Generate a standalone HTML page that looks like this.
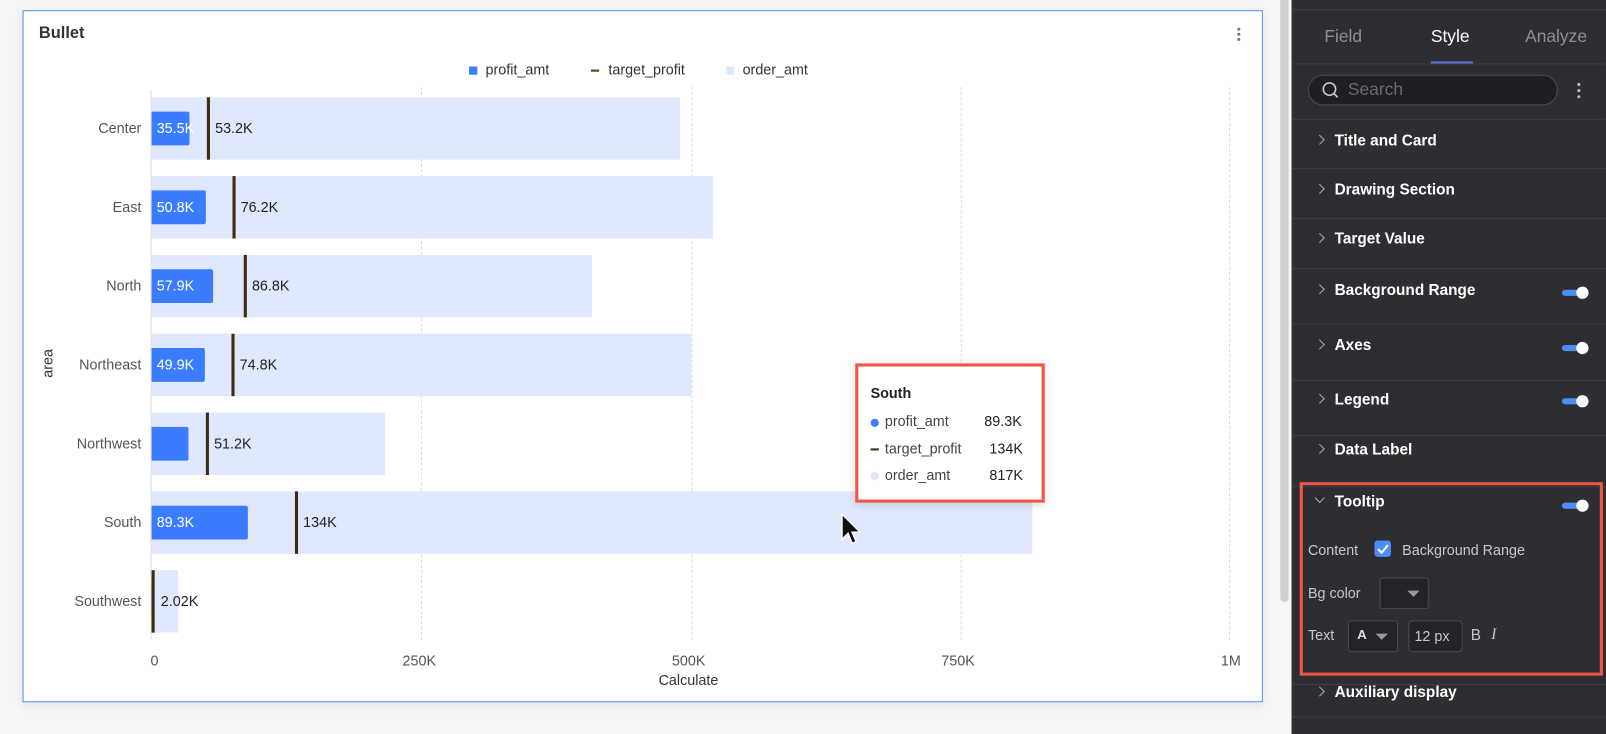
<!DOCTYPE html>
<html><head><meta charset="utf-8"><style>
*{box-sizing:border-box;margin:0;padding:0}
body{width:1606px;height:734px;overflow:hidden;background:#f5f5f6;font-family:"Liberation Sans",Arial,sans-serif}
#s{position:absolute;left:0;top:0;width:1568px;height:717px;transform:scale(1.02423,1.0237);transform-origin:0 0}
.a{position:absolute}
.card{left:22px;top:10px;width:1211px;height:676px;background:#fff;border:1px solid #4e8cf7;box-shadow:0 3px 8px rgba(0,0,0,.08)}
.lab{font-size:14px;color:#555;text-align:right;width:100px;left:38px}
.bg{background:#e0e8fd;height:61px;left:148px}
.pf{background:#3b7cff;height:33px;left:148px;border-radius:0 2px 2px 0;color:#fff;font-size:14px;line-height:33px;padding-left:5px;white-space:nowrap}
.tg{background:#3d2b0f;width:3px;height:61px}
.tv{font-size:14px;color:#222}
.grid{border-left:1px dashed #ddd;top:85px;height:540px;width:0}
.tick{font-size:14px;color:#555;top:637px}
.p{left:1261px;top:0;width:307px;height:717px;background:#2d2e32}
.it{left:1261px;width:307px;color:#fff;font-weight:bold;font-size:15px;padding-left:42px}
.ln{left:1261px;width:307px;height:1px;background:#3e3f44}
.chev{position:absolute;left:24px;top:4px;width:7px;height:7px;border-right:1.5px solid #aaa;border-top:1.5px solid #aaa;transform:rotate(45deg)}
.tog{left:1525px;width:24px;height:6px;background:#4e8cf7;border-radius:3px}
.tog:after{content:"";position:absolute;right:-2px;top:-3px;width:12px;height:12px;border-radius:6px;background:#fff}
.g{color:#c8c8cc;font-size:14px}
</style></head><body><div id="s">
<div class="a card"></div>
<div class="a" style="left:38px;top:24px;font-size:16px;font-weight:bold;color:#333">Bullet</div>
<div class="a" style="left:1208px;top:27px;width:3px;height:3px;background:#777;border-radius:2px;box-shadow:0 5px 0 #777,0 10px 0 #777"></div>
<!-- legend -->
<div class="a" style="left:458px;top:65px;width:8px;height:8px;background:#3b7cff"></div>
<div class="a" style="left:474px;top:60px;font-size:14px;color:#333">profit_amt</div>
<div class="a" style="left:577px;top:68px;width:8px;height:2px;background:#5a3f15"></div>
<div class="a" style="left:594px;top:60px;font-size:14px;color:#333">target_profit</div>
<div class="a" style="left:709px;top:65px;width:8px;height:8px;background:#dfe7fd"></div>
<div class="a" style="left:725px;top:60px;font-size:14px;color:#333">order_amt</div>
<!-- grid -->
<div class="a grid" style="left:411px"></div><div class="a grid" style="left:675px"></div><div class="a grid" style="left:938px"></div><div class="a grid" style="left:1200px"></div>
<div class="a" style="left:147px;top:88px;width:1px;height:537px;background:#ddd"></div>
<!-- rows -->
<div class="a bg" style="top:95px;width:516px"></div><div class="a pf" style="top:109px;width:37px">35.5K</div><div class="a tg" style="left:202px;top:95px"></div><div class="a tv" style="left:210px;top:117px">53.2K</div><div class="a lab" style="top:117px">Center</div>
<div class="a bg" style="top:172px;width:548px"></div><div class="a pf" style="top:186px;width:53px">50.8K</div><div class="a tg" style="left:227px;top:172px"></div><div class="a tv" style="left:235px;top:194px">76.2K</div><div class="a lab" style="top:194px">East</div>
<div class="a bg" style="top:249px;width:430px"></div><div class="a pf" style="top:263px;width:60px">57.9K</div><div class="a tg" style="left:238px;top:249px"></div><div class="a tv" style="left:246px;top:271px">86.8K</div><div class="a lab" style="top:271px">North</div>
<div class="a bg" style="top:326px;width:527px"></div><div class="a pf" style="top:340px;width:52px">49.9K</div><div class="a tg" style="left:226px;top:326px"></div><div class="a tv" style="left:234px;top:348px">74.8K</div><div class="a lab" style="top:348px">Northeast</div>
<div class="a bg" style="top:403px;width:228px"></div><div class="a pf" style="top:417px;width:36px"></div><div class="a tg" style="left:201px;top:403px"></div><div class="a tv" style="left:209px;top:425px">51.2K</div><div class="a lab" style="top:425px">Northwest</div>
<div class="a bg" style="top:480px;width:860px"></div><div class="a pf" style="top:494px;width:94px">89.3K</div><div class="a tg" style="left:288px;top:480px"></div><div class="a tv" style="left:296px;top:502px">134K</div><div class="a lab" style="top:502px">South</div>
<div class="a bg" style="top:557px;width:26px"></div><div class="a" style="left:148px;top:571px;width:2px;height:33px;background:#3b7cff"></div><div class="a tg" style="left:148px;top:557px"></div><div class="a tv" style="left:157px;top:579px">2.02K</div><div class="a lab" style="top:579px">Southwest</div>
<div class="a" style="left:32px;top:347px;font-size:14px;color:#333;transform:rotate(-90deg)">area</div>
<div class="a tick" style="left:147px">0</div><div class="a tick" style="left:393px">250K</div><div class="a tick" style="left:656px">500K</div><div class="a tick" style="left:919px">750K</div><div class="a tick" style="left:1192px">1M</div>
<div class="a" style="left:643px;top:656px;font-size:14px;color:#333">Calculate</div>
<!-- tooltip -->
<div class="a" style="left:835px;top:355px;width:185px;height:136px;background:#fff;border:3px solid #f05545;box-shadow:0 2px 8px rgba(0,0,0,.15)"></div>
<div class="a" style="left:850px;top:376px;font-size:14px;color:#222;font-weight:bold">South</div>
<div class="a" style="left:850px;top:409px;width:8px;height:8px;border-radius:4px;background:#3b7cff"></div>
<div class="a" style="left:864px;top:403px;font-size:14px;color:#444">profit_amt</div><div class="a" style="left:961px;top:403px;font-size:14px;color:#222">89.3K</div>
<div class="a" style="left:850px;top:438px;width:8px;height:1.5px;background:#3d2b0f"></div>
<div class="a" style="left:864px;top:430px;font-size:14px;color:#444">target_profit</div><div class="a" style="left:966px;top:430px;font-size:14px;color:#222">134K</div>
<div class="a" style="left:850px;top:461px;width:8px;height:8px;border-radius:4px;background:#dfe7fd"></div>
<div class="a" style="left:864px;top:456px;font-size:14px;color:#444">order_amt</div><div class="a" style="left:966px;top:456px;font-size:14px;color:#222">817K</div>
<svg class="a" style="left:820px;top:500px" width="24" height="36" viewBox="0 0 24 36"><path d="M2 2 L2 27 L8 21 L12 31 L16 29 L12 20 L20 20 Z" fill="#111" stroke="#fff" stroke-width="1.5"/></svg>
<!-- scrollbar -->
<div class="a" style="left:1250px;top:0;width:8px;height:588px;background:#cfcfcf;border-radius:0 0 4px 4px"></div>
<!-- panel -->
<div class="a p"></div>
<div class="a" style="left:1261px;top:9px;width:307px;height:1px;background:#3e3f44"></div>
<div class="a" style="left:1293px;top:26px;font-size:17px;color:#8e8f94">Field</div>
<div class="a" style="left:1397px;top:26px;font-size:17px;color:#fff">Style</div>
<div class="a" style="left:1489px;top:26px;font-size:17px;color:#8e8f94">Analyze</div>
<div class="a ln" style="top:62px"></div>
<div class="a" style="left:1397px;top:60px;width:41px;height:2px;background:#6070e0"></div>
<div class="a" style="left:1277px;top:73px;width:244px;height:30px;border:1px solid #4a4b50;border-radius:15px;background:#1e1f22"></div>
<svg class="a" style="left:1290px;top:79px" width="18" height="18" viewBox="0 0 18 18"><circle cx="8" cy="8" r="6" fill="none" stroke="#ccc" stroke-width="1.6"/><path d="M12.5 12.5 L16 16" stroke="#ccc" stroke-width="1.6"/></svg>
<div class="a" style="left:1316px;top:78px;font-size:17px;color:#6b6c72">Search</div>
<div class="a" style="left:1540px;top:81px;width:3px;height:3px;background:#bbb;border-radius:2px;box-shadow:0 6px 0 #bbb,0 12px 0 #bbb"></div>
<div class="a ln" style="top:116px"></div>
<div class="a it" style="top:129px"><i class="chev"></i>Title and Card</div><div class="a ln" style="top:164px"></div>
<div class="a it" style="top:177px"><i class="chev"></i>Drawing Section</div><div class="a ln" style="top:213px"></div>
<div class="a it" style="top:225px"><i class="chev"></i>Target Value</div><div class="a ln" style="top:262px"></div>
<div class="a it" style="top:275px"><i class="chev"></i>Background Range</div><div class="a tog" style="top:283px"></div><div class="a ln" style="top:316px"></div>
<div class="a it" style="top:329px"><i class="chev"></i>Axes</div><div class="a tog" style="top:337px"></div><div class="a ln" style="top:371px"></div>
<div class="a it" style="top:382px"><i class="chev"></i>Legend</div><div class="a tog" style="top:389px"></div><div class="a ln" style="top:425px"></div>
<div class="a it" style="top:431px"><i class="chev"></i>Data Label</div><div class="a ln" style="top:475px"></div>
<div class="a" style="left:1269px;top:471px;width:296px;height:189px;border:3px solid #f05545"></div>
<div class="a it" style="top:482px"><i class="chev" style="transform:rotate(135deg);top:1px"></i>Tooltip</div><div class="a tog" style="top:491px"></div>
<div class="a g" style="left:1277px;top:529px">Content</div>
<div class="a" style="left:1342px;top:528px;width:16px;height:16px;background:#4e8cf7;border-radius:3px"></div>
<svg class="a" style="left:1342px;top:528px" width="16" height="16"><path d="M3.5 8.5 L7 12 L13 4.5" stroke="#fff" stroke-width="2" fill="none"/></svg>
<div class="a g" style="left:1369px;top:529px">Background Range</div>
<div class="a g" style="left:1277px;top:571px">Bg color</div>
<div class="a" style="left:1347px;top:564px;width:48px;height:31px;border:1px solid #4a4b50;border-radius:3px;background:#232427"></div>
<div class="a" style="left:1374px;top:577px;border:6px solid transparent;border-top:6px solid #999;border-bottom:0"></div>
<div class="a g" style="left:1277px;top:612px">Text</div>
<div class="a" style="left:1316px;top:606px;width:49px;height:31px;border:1px solid #4a4b50;border-radius:3px;background:#232427"></div>
<div class="a" style="left:1325px;top:612px;font-size:13px;color:#ddd;font-weight:bold">A</div>
<div class="a" style="left:1343px;top:619px;border:6px solid transparent;border-top:6px solid #999;border-bottom:0"></div>
<div class="a" style="left:1375px;top:606px;width:53px;height:31px;border:1px solid #4a4b50;border-radius:4px;background:#232427"></div>
<div class="a g" style="left:1381px;top:613px">12 px</div>
<div class="a g" style="left:1436px;top:612px;font-size:15px">B</div>
<div class="a g" style="left:1456px;top:612px;font-style:italic;font-family:'Liberation Serif',serif;font-size:15px">I</div>
<div class="a ln" style="top:668px"></div>
<div class="a it" style="top:668px"><i class="chev"></i>Auxiliary display</div><div class="a ln" style="top:700px"></div>
</div></body></html>
